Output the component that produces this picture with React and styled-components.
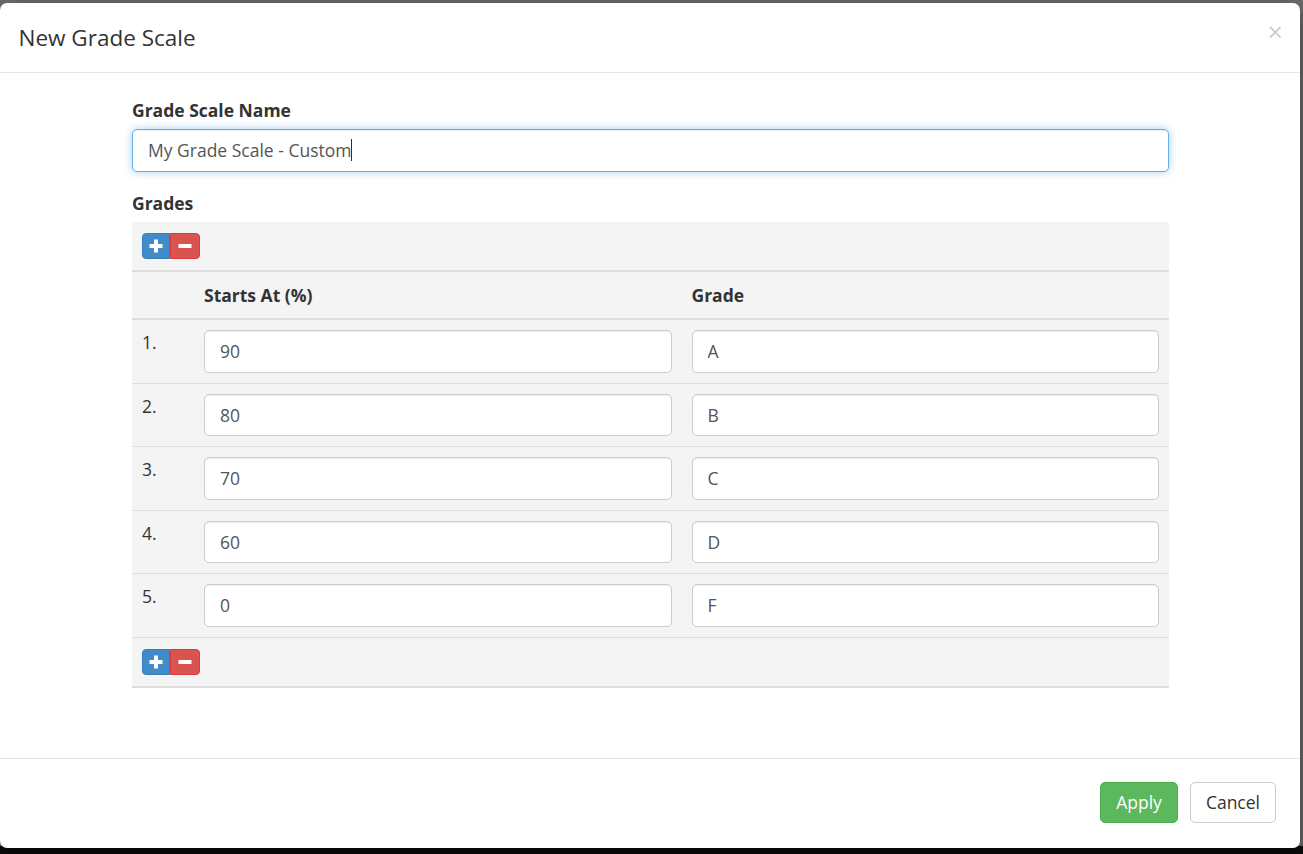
import React from "react";
import styled, { createGlobalStyle } from "styled-components";

const Global = createGlobalStyle`
  html, body { margin: 0; padding: 0; }
  body {
    background: linear-gradient(to bottom, #6e6e6e 0, #6e6e6e 846px, #0c0c0c 846px);
    min-height: 854px;
    font-family: "Open Sans", "Liberation Sans", sans-serif;
    font-size: 17.5px;
    line-height: 1.42857;
    color: #333;
  }
  * { box-sizing: border-box; }
`;

const Backdrop = styled.div`
  padding: 3px 3px 0 0;
  height: 854px;
`;

const Modal = styled.div`
  width: 1300px;
  height: 845px;
  background: #fff;
  border-radius: 7px;
  box-shadow: 0 6px 20px rgba(0, 0, 0, 0.5);
  display: flex;
  flex-direction: column;
  overflow: hidden;
`;

const Header = styled.div`
  display: flex;
  align-items: center;
  justify-content: space-between;
  padding: 18px 19px 18px 18.5px;
  border-bottom: 1px solid #e5e5e5;
  height: 70px;
`;

const Title = styled.h4`
  margin: 0;
  font-size: 22.5px;
  font-weight: 400;
  line-height: 32px;
  color: #333;
`;

const Close = styled.button`
  border: 0;
  background: transparent;
  padding: 0;
  font-family: "Open Sans", "Liberation Sans", sans-serif;
  font-size: 27px;
  font-weight: 400;
  line-height: 1;
  color: #000;
  opacity: 0.2;
  margin-top: -12px;
  margin-right: -2px;
  cursor: pointer;
`;

const Body = styled.div`
  flex: 1;
  padding: 25px 19px 0 19px;
`;

const Content = styled.div`
  width: 1037px;
  margin: 0 0 0 113px;
`;

const Label = styled.label`
  display: block;
  font-weight: 700;
  margin-bottom: 6px;
  line-height: 25px;
`;

const TextInput = styled.input`
  display: block;
  width: 100%;
  height: 42.5px;
  padding: 7.5px 15px;
  font-family: "Open Sans", "Liberation Sans", sans-serif;
  font-size: 17.5px;
  color: #555;
  background: #fff;
  border: 1px solid ${(p) => (p.$focused ? "#66afe9" : "#ccc")};
  border-radius: 5px;
  outline: none;
  box-shadow: ${(p) =>
    p.$focused
      ? "inset 0 1px 1px rgba(0,0,0,.075), 0 0 8px rgba(102,175,233,.6)"
      : "inset 0 1px 1px rgba(0,0,0,.075)"};
`;

const FormGroup = styled.div`
  margin-bottom: 19.5px;
`;

const Caret = styled.span`
  display: inline-block;
  width: 1px;
  height: 22px;
  background: #333;
  vertical-align: middle;
`;

const NameField = styled.div`
  position: relative;
`;

const FakeValue = styled.div`
  position: absolute;
  left: 16px;
  top: 0;
  height: 42.5px;
  display: flex;
  align-items: center;
  color: #555;
  pointer-events: none;
`;

const Panel = styled.div`
  background: #f4f4f4;
  border-bottom: 2px solid #ddd;
`;

const Toolbar = styled.div`
  padding: 11px 10px;
  display: flex;
`;

const BtnGroup = styled.div`
  display: flex;
`;

const IconBtn = styled.button`
  height: 26px;
  width: ${(p) => (p.$variant === "add" ? "28px" : "30px")};
  padding: 0;
  display: flex;
  align-items: center;
  justify-content: center;
  border: 1px solid ${(p) => (p.$variant === "add" ? "#357ebd" : "#d43f3a")};
  background: ${(p) => (p.$variant === "add" ? "#428bca" : "#d9534f")};
  border-radius: ${(p) => (p.$variant === "add" ? "4px 0 0 4px" : "0 4px 4px 0")};
  cursor: pointer;
`;

const Grid = styled.div`
  display: grid;
  grid-template-columns: 62px 1fr 1fr;
  border-top: ${(p) => (p.$head ? "2px solid #ddd" : "0")};
  border-bottom: ${(p) => (p.$head ? "2px solid #ddd" : "1px solid #ddd")};
`;

const HeadCell = styled.div`
  padding: 10px 10px;
  line-height: 26px;
  font-weight: 700;
`;

const Cell = styled.div`
  padding: 10px;
  line-height: 25px;
`;

const Footer = styled.div`
  border-top: 1px solid #e5e5e5;
  padding: 23px 24px 25px;
  display: flex;
  justify-content: flex-end;
  gap: 12px;
`;

const Btn = styled.button`
  height: 41.5px;
  padding: 7px 15px;
  font-family: "Open Sans", "Liberation Sans", sans-serif;
  font-size: 17.5px;
  line-height: 25px;
  border-radius: 5px;
  border: 1px solid ${(p) => (p.$primary ? "#4cae4c" : "#ccc")};
  background: ${(p) => (p.$primary ? "#5cb85c" : "#fff")};
  color: ${(p) => (p.$primary ? "#fff" : "#333")};
  cursor: pointer;
`;

const PlusIcon = () => (
  <svg width="14" height="14" viewBox="0 0 14 14">
    <rect x="5" y="0.5" width="4" height="13" fill="#fff" />
    <rect x="0.5" y="5" width="13" height="4" fill="#fff" />
  </svg>
);

const MinusIcon = () => (
  <svg width="14" height="14" viewBox="0 0 14 14">
    <rect x="0.5" y="5" width="13" height="4" fill="#fff" />
  </svg>
);

const AddRemove = () => (
  <Toolbar>
    <BtnGroup>
      <IconBtn $variant="add" aria-label="Add">
        <PlusIcon />
      </IconBtn>
      <IconBtn $variant="remove" aria-label="Remove">
        <MinusIcon />
      </IconBtn>
    </BtnGroup>
  </Toolbar>
);

const grades = [
  { start: "90", grade: "A" },
  { start: "80", grade: "B" },
  { start: "70", grade: "C" },
  { start: "60", grade: "D" },
  { start: "0", grade: "F" },
];

export default function App() {
  return (
    <>
      <Global />
      <Backdrop>
        <Modal>
          <Header>
            <Title>New Grade Scale</Title>
            <Close aria-label="Close">×</Close>
          </Header>
          <Body>
            <Content>
              <FormGroup>
                <Label>Grade Scale Name</Label>
                <NameField>
                  <TextInput $focused readOnly value="" />
                  <FakeValue>
                    My Grade Scale - Custom
                    <Caret />
                  </FakeValue>
                </NameField>
              </FormGroup>
              <Label>Grades</Label>
              <Panel>
                <AddRemove />
                <Grid $head>
                  <HeadCell />
                  <HeadCell>Starts At (%)</HeadCell>
                  <HeadCell>Grade</HeadCell>
                </Grid>
                {grades.map((g, i) => (
                  <Grid key={i}>
                    <Cell>{i + 1}.</Cell>
                    <Cell>
                      <TextInput readOnly value={g.start} />
                    </Cell>
                    <Cell>
                      <TextInput readOnly value={g.grade} />
                    </Cell>
                  </Grid>
                ))}
                <AddRemove />
              </Panel>
            </Content>
          </Body>
          <Footer>
            <Btn $primary>Apply</Btn>
            <Btn>Cancel</Btn>
          </Footer>
        </Modal>
      </Backdrop>
    </>
  );
}
